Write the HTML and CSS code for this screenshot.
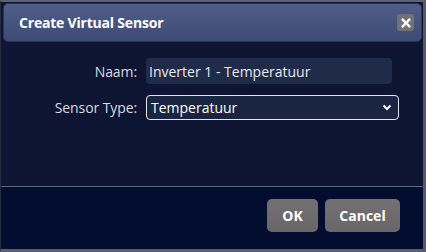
FILE: index.html
```html
<!DOCTYPE html>
<html>
<head>
<meta charset="utf-8">
<link rel="stylesheet" href="styles.css">
</head>
<body>
<div class="dialog">
  <div class="titlebar">
    <span class="title">Create Virtual Sensor</span>
    <span class="close">
      <svg width="10" height="10" viewBox="0 0 10 10"><path d="M1.8 1.8 L8.2 8.2 M8.2 1.8 L1.8 8.2" stroke="#fff" stroke-width="2.4" stroke-linecap="square"/></svg>
    </span>
  </div>
  <div class="content">
    <div class="form">
      <label class="label">Naam:</label>
      <div class="input">Inverter 1 - Temperatuur</div>
      <label class="label">Sensor Type:</label>
      <div class="select">
        <span>Temperatuur</span>
        <svg width="10" height="7" viewBox="0 0 10 7"><path d="M1.5 1.5 L5 5 L8.5 1.5" fill="none" stroke="#fff" stroke-width="2"/></svg>
      </div>
    </div>
  </div>
  <div class="footer">
    <button class="btn ok">OK</button>
    <button class="btn cancel">Cancel</button>
  </div>
</div>
</body>
</html>
```

FILE: styles.css
```css
html, body {
  margin: 0;
  padding: 0;
  width: 426px;
  height: 252px;
  overflow: hidden;
  background: #0c1430;
  font-family: "Open Sans", "Noto Sans", sans-serif;
}
.dialog {
  box-sizing: border-box;
  width: 426px;
  height: 252px;
  border-top: 2px solid #5c6072;
  border-right: 3px solid #545868;
  border-bottom: 3px solid #5a5e6e;
  border-left: 1px solid #262c40;
  background: #0d1532;
  display: flex;
  flex-direction: column;
}
.titlebar {
  margin: 1px 1px 0 2px;
  height: 39px;
  border-radius: 5px;
  background: linear-gradient(#4f5e88, #3d4a74);
  border: 1px solid #2b3559;
  display: flex;
  align-items: center;
  justify-content: space-between;
  padding: 0 7px 0 15px;
  box-sizing: border-box;
}
.title {
  color: #fff;
  font-weight: 700;
  font-size: 14px;
  letter-spacing: -0.2px;
}
.close {
  width: 17px;
  height: 17px;
  border-radius: 3px;
  background: #707276;
  display: flex;
  align-items: center;
  justify-content: center;
}
.content {
  height: 144px;
  padding-top: 16px;
  box-sizing: border-box;
}
.form {
  display: grid;
  grid-template-columns: 136px 253px;
  column-gap: 9px;
  row-gap: 11px;
  align-items: center;
}
.label {
  text-align: right;
  color: #d8dbe2;
  font-size: 14px;
  letter-spacing: -0.1px;
}
.input {
  width: 246px;
  height: 26px;
  box-sizing: border-box;
  background: #1f2b48;
  border-radius: 4px;
  color: #e8eaf0;
  font-size: 14px;
  padding-left: 3px;
  display: flex;
  align-items: center;
}
.select {
  height: 25px;
  box-sizing: border-box;
  background: #1a2542;
  border: 1px solid #e8e8ec;
  border-radius: 4px;
  color: #fff;
  font-size: 14px;
  padding: 0 6px 0 4px;
  display: flex;
  align-items: center;
  justify-content: space-between;
}
.footer {
  flex: 1;
  border-top: 1px solid #5d6784;
  background: #020d30;
  display: flex;
  justify-content: flex-end;
  align-items: flex-start;
  gap: 7px;
  padding: 12px 23px 0 0;
}
.btn {
  height: 33px;
  border: none;
  border-radius: 5px;
  background: linear-gradient(#727070, #686666);
  color: #fff;
  font-family: "Open Sans", "Noto Sans", sans-serif;
  font-weight: 700;
  font-size: 14px;
  padding: 0;
}
.ok { width: 51px; }
.cancel { width: 75px; }
```
